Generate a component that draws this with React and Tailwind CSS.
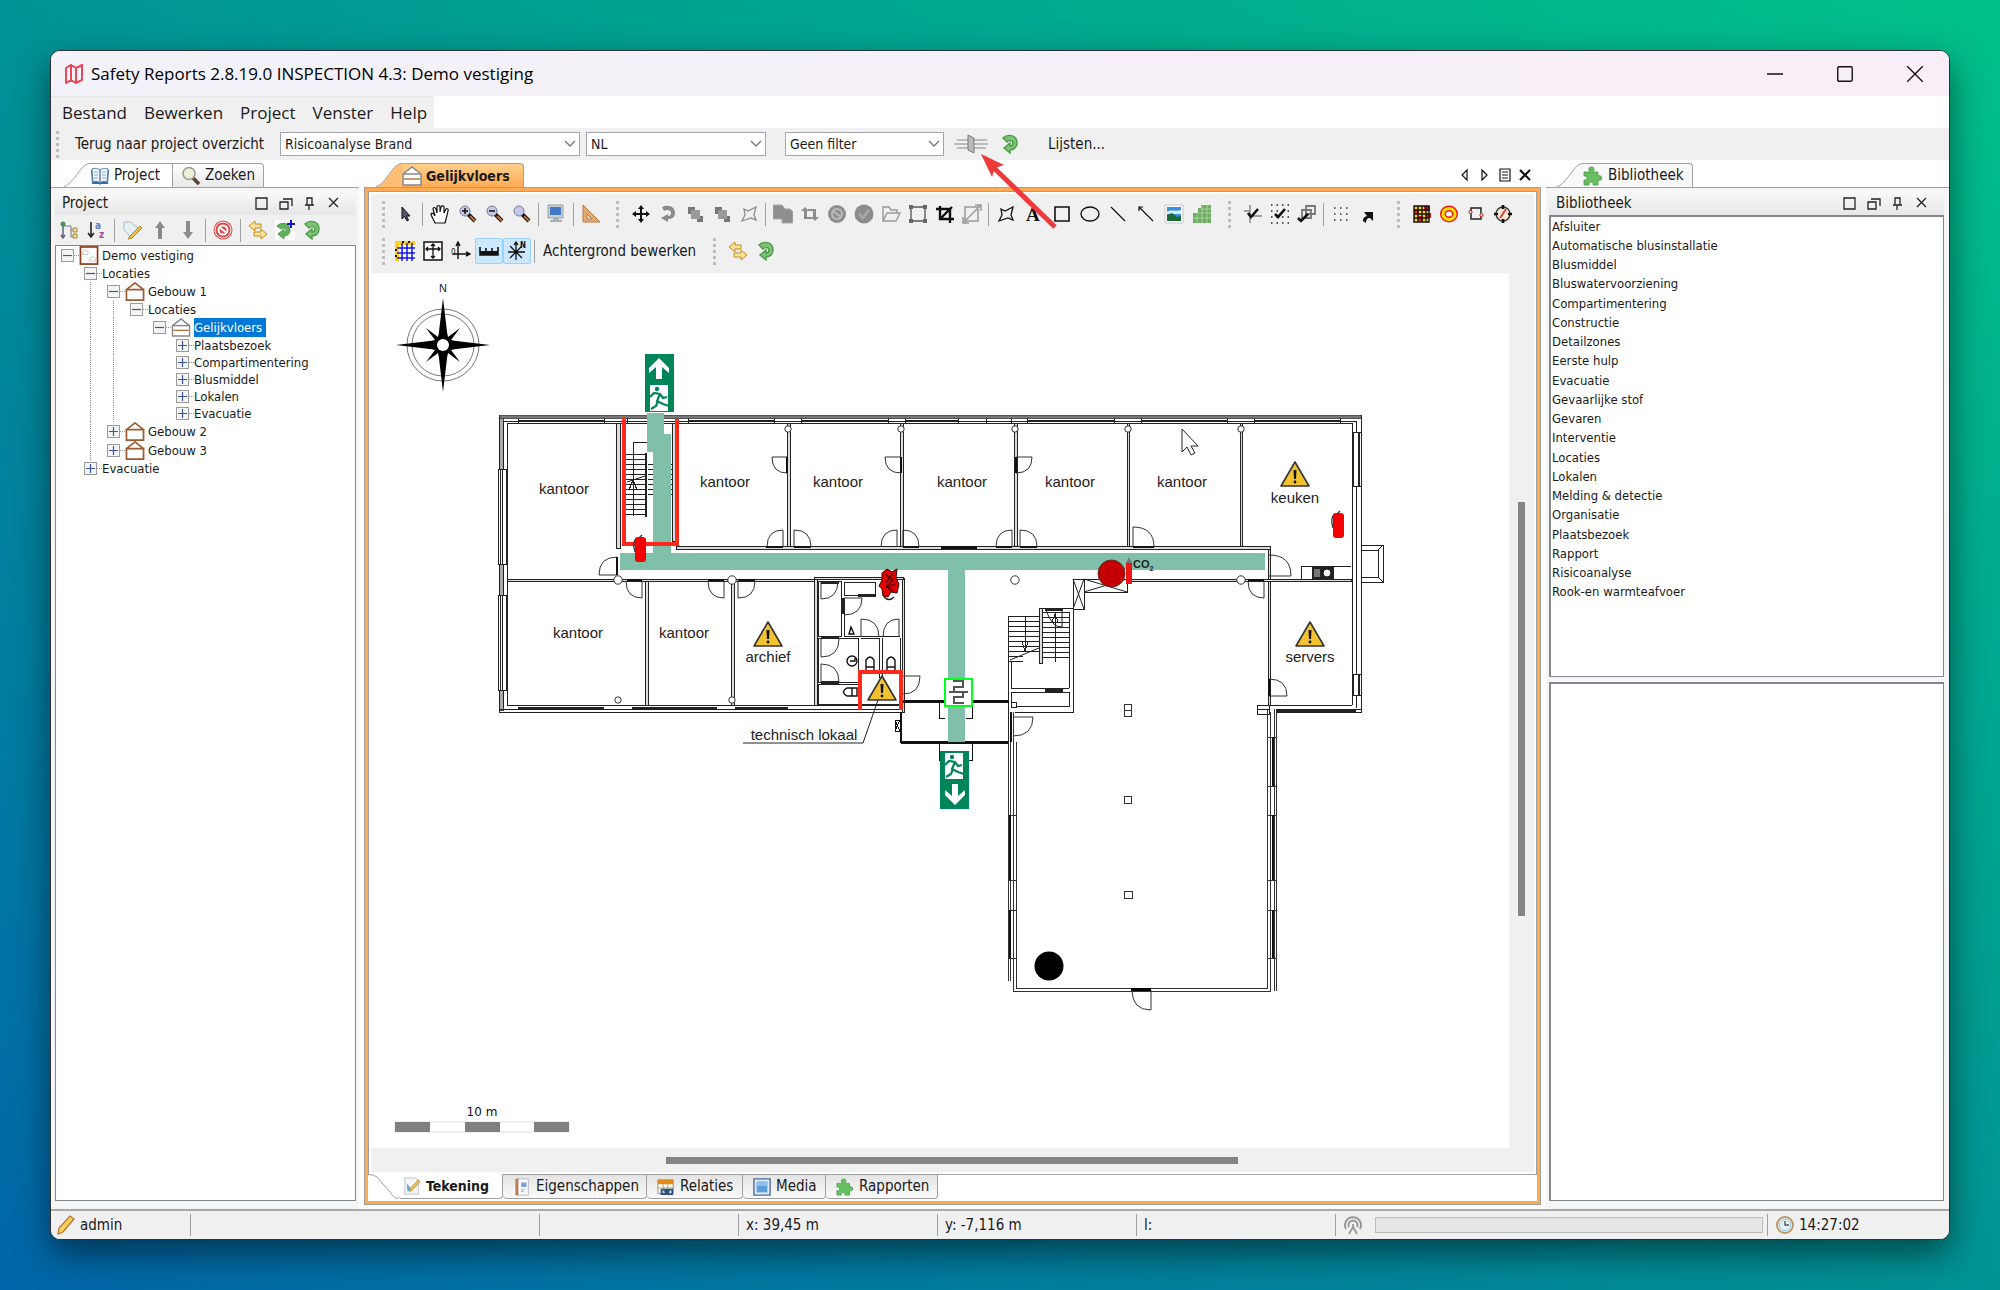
import { useState } from 'react';

const GREEN = '#5fb257';

// 20x20 glyphs used by the toolbars, tabs and the status bar
const icons = {
  book: (
    <>
      <path d="M1 4l1 14h7l1 1 1-1h7l1-14z" fill="#2f6ea5" />
      <path d="M2 3c3-1 6-1 8 1v13c-2-2-5-2-7-1zM18 3c-3-1-6-1-8 1v13c2-2 5-2 7-1z" fill="#eef4f9" stroke="#5c87ab" />
      <path d="M4 6h4M4 9h4M4 12h4M12 6h4M12 9h4M12 12h4" stroke="#9db3c4" />
    </>
  ),
  search: (
    <>
      <path d="M12 12l6 6" stroke="#5a4037" strokeWidth="3.5" />
      <circle cx="8" cy="7.5" r="6" fill="#eef0d8" stroke="#9c9c94" strokeWidth="1.6" />
    </>
  ),
  floor: (
    <>
      <path d="M1 8L10 1l9 7v11H1z" fill="#fff" stroke="#888" strokeWidth="1.5" />
      <path d="M1 8h18" stroke="#888" strokeWidth="1.5" />
      <path d="M2 13h16" stroke="#b5773f" strokeWidth="1.5" />
    </>
  ),
  building: <path d="M0 8h20M1 8v11h18V8L10 1 1 8" fill="none" stroke="#9a5b33" strokeWidth="1.8" />,
  site: (
    <>
      <rect x="1" y="1" width="18" height="18" fill="#fff" stroke="#8b3e16" strokeWidth="1.8" />
      <path d="M3 9V6l3-2 3 2v3zM11 16v-3l3-2 3 2v3z" fill="none" stroke="#c4c4c4" />
    </>
  ),
  puzzle: (
    <path
      d="M1 6h6c-2-3-1-5 1.500-5s3.500 2 1.500 5h5v4c5-2 5 6 0 4v5h-5c1-4-5-4-4 0H1v-5c4 1 4-5 0-4z"
      fill="#67bf62" stroke="#4a9b47" strokeWidth="0.800"
    />
  ),
  treeSort: (
    <>
      <circle cx="4" cy="4" r="2.500" fill="#3b9b55" />
      <path d="M4 6v12M2 15l2 3 2-3" stroke="#667" fill="none" strokeWidth="1.500" />
      <path d="M4 6h8v11h3M12 10h3" stroke="#778" fill="none" />
      <path d="M14 8h4v4h-4zM14 14h4v4h-4z" fill="#f3e09a" stroke="#a58b3a" />
    </>
  ),
  sortAz: (
    <>
      <path d="M4 2v15M1 13l3 4 3-4" stroke="#222" fill="none" strokeWidth="1.600" />
      <text x="8" y="9" fontSize="10" fontWeight="bold" fill="#5b7fc7">a</text>
      <text x="12" y="18" fontSize="10" fontWeight="bold" fill="#a34a9a">z</text>
    </>
  ),
  tag: (
    <>
      <path d="M2 2l7 0 8 7-7 9-8-8z" fill="#e6eff5" stroke="#a9bccb" />
      <path d="M18 6l-10 10-2 3 4-1L20 8z" fill="#f5c04a" stroke="#b98224" />
    </>
  ),
  up: <path d="M10 1l5 7h-3v11H8V8H5z" fill="#8c8c8c" />,
  down: <path d="M10 19l5-7h-3V1H8v11H5z" fill="#8c8c8c" />,
  forbid: (
    <>
      <circle cx="10" cy="10" r="9.500" fill="#e0494b" />
      <circle cx="10" cy="10" r="8" fill="none" stroke="#fff" />
      <circle cx="10" cy="10" r="4.500" fill="none" stroke="#fff" strokeWidth="2" />
      <path d="M6 7l8 6" stroke="#fff" strokeWidth="2" />
    </>
  ),
  swap: (
    <>
      <path d="M1 6l6-5v3h6v4H7v3z" fill="#fbe29a" stroke="#c48a1c" />
      <path d="M19 14l-6-5v3H6v4h7v3z" fill="#fbe29a" stroke="#c48a1c" />
    </>
  ),
  refresh: (
    <>
      <path d="M3 4c4-4 14-4 14 5 0 5-4 7-7 7v3l-6-5 6-5v3c2 0 3-1 3-3 0-3-4-3-6-1z" fill="#7cc473" stroke="#4d9a48" strokeWidth="1.400" />
    </>
  ),
  refreshPlus: (
    <>
      <rect width="20" height="20" fill="#fff" />
      <path d="M2 6c3-4 13-4 13 4 0 4-3 6-6 6v3l-6-5 6-5v3c2 0 2-1 2-2 0-3-3-2-5-1z" fill={GREEN} stroke="#4d9a48" />
      <path d="M16 0v8M12 4h8" stroke="#1717d6" strokeWidth="2" />
    </>
  ),
  pointer: <path d="M7 3v12l2.500-2.500L12 17l1.500-.8L11.500 12H15z" fill="#55557a" stroke="#111" />,
  hand: (
    <path
      d="M5 19C4 16 1 12 1 10c1-2 3 0 4 2L3 5c0-2 2-2 3 0l1 4V3c0-2 3-2 3 0v5l1-5c1-2 3-1 3 0v6l2-4c1-1 3 0 2 2-1 5-2 8-3 12z"
      fill="#fff" stroke="#111" strokeWidth="1.200"
    />
  ),
  zoomIn: (
    <>
      <path d="M10 10l7 7" stroke="#111" strokeWidth="4" /><path d="M12 12l5 5" stroke="#c4722b" strokeWidth="2" />
      <circle cx="7" cy="7" r="5" fill="#c5c7e6" stroke="#77799a" /><path d="M4 7h6M7 4v6" stroke="#111" strokeWidth="1.500" />
    </>
  ),
  zoomOut: (
    <>
      <path d="M10 10l7 7" stroke="#111" strokeWidth="4" /><path d="M12 12l5 5" stroke="#c4722b" strokeWidth="2" />
      <circle cx="7" cy="7" r="5" fill="#c5c7e6" stroke="#77799a" /><path d="M4 7h6" stroke="#111" strokeWidth="1.500" />
    </>
  ),
  zoom: (
    <>
      <path d="M10 10l7 7" stroke="#111" strokeWidth="4" /><path d="M12 12l5 5" stroke="#c4722b" strokeWidth="2" />
      <circle cx="7" cy="7" r="5" fill="#c5c7e6" stroke="#77799a" />
    </>
  ),
  monitor: (
    <>
      <path d="M2 1h15v13H2z" fill="#c9ced4" stroke="#9aa1a8" /><path d="M4 3h11v8H4z" fill="#3f78c9" />
      <path d="M7 14h6v2h3v2H4v-2h3z" fill="#aab0b6" />
    </>
  ),
  triangle: <path d="M2 1v17h17zM6 10l5 5H6z" fill="#e7a970" stroke="#b87a44" fillRule="evenodd" />,
  move: <path d="M10 1l3 4h-2v4h4V7l4 3-4 3v-2h-4v4h2l-3 4-3-4h2v-4H5v2l-4-3 4-3v2h4V5H7z" fill="#111" />,
  rotate: <path d="M4 3c7-3 13 0 13 6 0 5-4 6-7 6v3l-7-4 7-4v2c2 0 3-1 3-3 0-3-4-4-7-2z" fill="#8c8c8c" />,
  layers: (
    <>
      <path d="M3 3h7v7H3zM12 12h6v6h-6z" fill="#777" /><path d="M6 6h9v9H6z" fill="#9a9a9a" />
    </>
  ),
  polyGray: <path d="M5 5l4 2 8-4-2 8 2 5-5-2-9 3 3-6z" fill="none" stroke="#8c8c8c" strokeWidth="1.300" />,
  poly: <path d="M5 5l4 2 8-4-2 8 2 5-5-2-9 3 3-6z" fill="none" stroke="#111" strokeWidth="1.300" />,
  pages: <path d="M0 1h9l3 4h5l3 3v11H9v-4H0z" fill="#8f8f8f" stroke="#a8a8a8" />,
  loop: <path d="M4 15V7H1l4-4 4 4H7v6h5v2zM16 5v8h3l-4 4-4-4h2V7H8V5z" fill="#8c8c8c" />,
  noGray: (
    <>
      <circle cx="10" cy="10" r="9" fill="#8c8c8c" /><circle cx="10" cy="10" r="5" fill="none" stroke="#bbb" strokeWidth="2" />
      <path d="M6 7l8 6" stroke="#bbb" strokeWidth="2" />
    </>
  ),
  okGray: (
    <>
      <circle cx="10" cy="10" r="9.500" fill="#8c8c8c" /><path d="M5 10l4 4 6-8" fill="none" stroke="#a8a8a8" strokeWidth="2.500" />
    </>
  ),
  folder: <path d="M2 17V3h6l2 3h6v3M2 17l4-8h13l-4 8z" fill="none" stroke="#999" strokeWidth="1.400" />,
  selection: (
    <>
      <path d="M3 3h14v14H3z" fill="none" stroke="#555" strokeWidth="1.300" />
      <path d="M1 1h4v4H1zM15 1h4v4h-4zM1 15h4v4H1zM15 15h4v4h-4z" fill="#666" />
    </>
  ),
  crop: <path d="M5 2v13h14M1 5h14v14M6 14L17 3" fill="none" stroke="#111" strokeWidth="2.400" />,
  resize: <path d="M3 3h13v14H3zM1 19L19 1M13 1h6v6M1 13v6h6" fill="none" stroke="#999" strokeWidth="1.500" />,
  letter: <text x="2" y="17" fontSize="19" fontWeight="bold" fill="#111" fontFamily="Liberation Serif, serif">A</text>,
  rect: <path d="M3 3h14v14H3z" fill="none" stroke="#111" strokeWidth="1.600" />,
  ellipse: <ellipse cx="10" cy="10" rx="9" ry="7" fill="none" stroke="#111" strokeWidth="1.400" />,
  line: <path d="M3 3l14 14" stroke="#111" strokeWidth="1.200" />,
  lineArrow: <path d="M3 3l14 14M3 7V3h4" fill="none" stroke="#111" strokeWidth="1.200" />,
  image: (
    <>
      <path d="M1 1h18v18H1z" fill="#fff" stroke="#c8c8c8" /><path d="M3 3h14v14H3z" fill="#3a8fe0" />
      <path d="M3 8c3-3 9 0 14-2v4H3z" fill="#d9eefb" /><path d="M3 11l5-2 5 4 4-1v5H3z" fill="#1c6b35" />
    </>
  ),
  greenGrid: (
    <>
      <path d="M1 9h5V4h3V1h10v18H1z" fill="#6fae62" />
      <path d="M1 14h18M6 9h13M9 5h10M5 9v10M10 1v18M15 1v18" stroke="#b5d8ac" strokeWidth="0.800" />
    </>
  ),
  crossCheck: (
    <>
      <path d="M7 1v18M1 7h6M7 12h12" stroke="#888" strokeWidth="1.500" />
      <path d="M5 9l3 4 7-8" fill="none" stroke="#111" strokeWidth="2.600" />
    </>
  ),
  dotsCheck: (
    <>
      <path d="M1 1h18M1 7h18M1 13h18M1 19h18" stroke="#222" strokeWidth="1.500" strokeDasharray="1.500 4" />
      <path d="M5 10l3 3 7-8" fill="none" stroke="#111" strokeWidth="2.600" />
    </>
  ),
  layersCheck: (
    <>
      <path d="M9 2h9v8H9zM5 6h9v8H5z" fill="#eee" stroke="#777" strokeWidth="1.800" />
      <path d="M1 14l3 3 7-7" fill="none" stroke="#111" strokeWidth="2.600" />
    </>
  ),
  dots: <path d="M3 4h15M3 10h15M3 16h15" stroke="#333" strokeWidth="1.500" strokeDasharray="1.500 4.500" />,
  diagArrow: <path d="M6 8h9v9l-3-3c-3 0-4 2-4 5l-3-2c0-3 1-4 4-5z" fill="#111" />,
  redGrid: (
    <>
      <path d="M2 2h15v15H2z" fill="#ffd400" /><path d="M2 5h5v4H2zM12 2h6v5h-6zM6 12h5v5H6zM14 9h5v5h-5z" fill="#e31b1b" />
      <path d="M2 2h15v16H2zM2 6h15M2 10h15M2 14h15M6 2v16M10 2v16M14 2v16" fill="none" stroke="#111" strokeWidth="1.400" />
    </>
  ),
  buoy: (
    <>
      <ellipse cx="10" cy="10" rx="9" ry="8.500" fill="#ee1c1c" />
      <ellipse cx="10" cy="10" rx="7.500" ry="7" fill="#ffe000" />
      <ellipse cx="10" cy="10" rx="4.500" ry="4" fill="#ee1c1c" />
      <ellipse cx="10" cy="10" rx="3" ry="2.500" fill="#f0f0f0" />
    </>
  ),
  node: (
    <>
      <path d="M5 4h10v11H5z" fill="none" stroke="#222" strokeWidth="1.500" />
      <circle cx="4.500" cy="8" r="1.600" fill="#fff" stroke="#d11" /><circle cx="15.500" cy="11" r="1.600" fill="#fff" stroke="#d11" />
    </>
  ),
  compass: (
    <>
      <circle cx="10" cy="10" r="7" fill="#f7e9cf" stroke="#333" strokeWidth="1.300" />
      <path d="M10 1v4M10 15v4M1 10h4M15 10h4" stroke="#111" strokeWidth="2.600" /><path d="M7 14l6-9" stroke="#e34" strokeWidth="1.800" />
    </>
  ),
  grid: (
    <>
      <path d="M0 0h20v4H4v16H0z" fill="#ffcf1a" /><path d="M4 4h16v16H4z" fill="#fff" />
      <path d="M7 2v18M12 2v18M17 2v18M2 7h18M2 12h18M2 17h18" stroke="#1414e6" strokeWidth="1.500" />
      <path d="M7 1h2M13 1h2M1 8v2M1 14v2" stroke="#111" strokeWidth="2" />
    </>
  ),
  fit: (
    <>
      <path d="M1 1h18v18H1z" fill="#fff" stroke="#111" strokeWidth="1.500" />
      <path d="M10 3v14M3 8h14M8 5l2-2 2 2M8 15l2 2 2-2M5 6L3 8l2 2M15 6l2 2-2 2" fill="none" stroke="#111" strokeWidth="1.300" />
    </>
  ),
  axes: (
    <>
      <path d="M7 2v16M2 13h16M5 5l2-4 2 4M15 11l4 2-4 2" fill="none" stroke="#111" strokeWidth="1.400" />
      <text x="0" y="14" fontSize="8" fill="#111">0</text>
    </>
  ),
  scale: (
    <>
      <path d="M1 6v8h18V6M7 7v4M13 7v4" fill="none" stroke="#111" strokeWidth="1.600" />
      <path d="M1 10h18v4H1z" fill="#111" />
    </>
  ),
  north: (
    <>
      <path d="M9 2v17M1 11h17M3 5l12 12M15 5L3 17M7 4l2-3 2 3" fill="none" stroke="#111" strokeWidth="1.300" />
      <text x="13" y="7" fontSize="8" fontWeight="bold" fill="#111">N</text>
    </>
  ),
  pen: (
    <>
      <path d="M2 1h12l3 3v15H2z" fill="#f5f8fb" stroke="#b7bec5" /><path d="M4 7l6 7-5 2z" fill="#64a9d9" />
      <path d="M17 3l2 2-9 10-3 1 1-3z" fill="#f2c14d" stroke="#b98224" strokeWidth="0.800" />
    </>
  ),
  notebook: (
    <>
      <path d="M3 1h14v18H3z" fill="#fafbfc" stroke="#b0b5ba" /><path d="M3 1h3v18H3z" fill="#c07a50" />
      <path d="M9 5h6v5H9z" fill="#7d9fe0" /><path d="M9 13h4M9 15h3" stroke="#9ab" />
    </>
  ),
  relations: (
    <>
      <path d="M1 2h17v15H1z" fill="#fff" stroke="#8a8a8a" /><path d="M1 2h17v5H1z" fill="#e58b1c" />
      <path d="M1 11h17M7 7v10M12 7v10" stroke="#b9a24a" />
      <path d="M5 13h5v5H5zM12 13h5v5h-5zM8 15h6" fill="none" stroke="#2d4f86" strokeWidth="2" />
    </>
  ),
  media: (
    <>
      <path d="M1 1h18v18H1z" fill="#dfeaf5" stroke="#4a6a9a" strokeWidth="1.500" /><path d="M4 4h12v12H4z" fill="#5d9edb" />
      <path d="M4 4h12v5H4z" fill="#8cc1ee" />
    </>
  ),
  pencil: <path d="M14 1l4 3L7 17l-5 2 1-6z" fill="#f6cf5c" stroke="#b5762a" strokeWidth="1.200" />,
  antenna: (
    <>
      <path d="M3 14a8 8 0 1 1 14 0M6 12a4.500 4.500 0 1 1 8 0" fill="none" stroke="#999" strokeWidth="2" />
      <path d="M10 9v5M10 12l-4 7M10 12l4 7" stroke="#999" strokeWidth="1.800" />
    </>
  ),
  clock: (
    <>
      <circle cx="10" cy="10" r="8" fill="#e6f1fb" stroke="#b89a66" strokeWidth="2" />
      <circle cx="10" cy="10" r="5.500" fill="none" stroke="#9cc4e8" /><path d="M10 6v4h4" fill="none" stroke="#555" strokeWidth="1.400" />
    </>
  ),
};

function Icon({ name, className = 'size-5' }) {
  return <svg viewBox="0 0 20 20" className={`${className} shrink-0`}>{icons[name]}</svg>;
}

function ToolButton({ name, active, narrow }) {
  return (
    <button
      aria-label={name}
      className={`flex h-[26px] shrink-0 items-center justify-center rounded-xs border ${narrow ? 'w-[27px]' : 'w-7'} ${
        active ? 'border-[#99d1ff] bg-[#cce8ff]' : 'border-transparent'
      }`}
    >
      <Icon name={name} />
    </button>
  );
}

const Sep = () => <span className="mx-[3px] h-[23px] w-px shrink-0 bg-[#a0a0a0]" />;
const Grip = () => <span className="h-[27px] w-0 shrink-0 border-l-3 border-dotted border-[#bdbdbd]" />;

const tools = (names, narrow) => names.map((n, i) => (n === '|' ? <Sep key={i} /> : <ToolButton key={i} name={n} narrow={narrow} />));

function Combo({ label, value, className }) {
  return (
    <div className={`relative ${className}`}>
      <select aria-label={label} defaultValue={value} className="size-full appearance-none border border-[#a3a6ae] bg-white px-1 text-sm outline-none">
        <option>{value}</option>
      </select>
      <svg viewBox="0 0 12 8" className="pointer-events-none absolute top-2 right-1 h-2 w-3">
        <path d="M1 1l5 5 5-5" fill="none" stroke="#777" strokeWidth="1.3" />
      </svg>
    </div>
  );
}

// slanted left side of a view tab
function TabEdge({ fill }) {
  return (
    <svg viewBox="0 0 26 24" className="h-6 w-[26px] shrink-0">
      <path d="M0 24C6 24 16 6 20 3Q23 0.500 26 0.500V24z" fill={fill} />
      <path d="M0 23.500C6 23.500 16 6 20 3Q23 0.500 26 0.500" fill="none" stroke="#a0a0a0" />
    </svg>
  );
}

function WindowGlyphs() {
  const glyphs = [
    'M2 2h11v11H2z',
    'M2 6h8v7H2zM5 3h9v7',
    'M5 2h5v7H5zM3 9h9M7 9v5',
    'M3 2l9 9M12 2l-9 9',
  ];
  return (
    <div className="ml-auto flex gap-[9px] pr-[15px]">
      {glyphs.map((d) => (
        <button key={d} aria-label="Venster">
          <svg viewBox="0 0 15 15" className="size-[15px]"><path d={d} fill="none" stroke="#222" strokeWidth="1.3" /></svg>
        </button>
      ))}
    </div>
  );
}

function PanelHeader({ title }) {
  return (
    <div className="flex h-6 shrink-0 items-center bg-linear-to-b from-[#fafafa] to-[#e6e6e6] pl-[7px]">
      <h2>{title}</h2>
      <WindowGlyphs />
    </div>
  );
}

// guides: one entry per column left of the expander, true where a dotted line passes
const tree = [
  { label: 'Demo vestiging', guides: [], open: true, icon: 'site' },
  { label: 'Locaties', guides: [0], open: true },
  { label: 'Gebouw 1', guides: [0, 1], open: true, icon: 'building' },
  { label: 'Locaties', guides: [0, 1, 1], open: true },
  { label: 'Gelijkvloers', guides: [0, 1, 1, 0], open: true, icon: 'floor', selected: true },
  { label: 'Plaatsbezoek', guides: [0, 1, 1, 0, 0] },
  { label: 'Compartimentering', guides: [0, 1, 1, 0, 0] },
  { label: 'Blusmiddel', guides: [0, 1, 1, 0, 0] },
  { label: 'Lokalen', guides: [0, 1, 1, 0, 0] },
  { label: 'Evacuatie', guides: [0, 1, 1, 0, 0] },
  { label: 'Gebouw 2', guides: [0, 1], icon: 'building' },
  { label: 'Gebouw 3', guides: [0, 1], icon: 'building' },
  { label: 'Evacuatie', guides: [0] },
];

function TreeRow({ item }) {
  return (
    <li className={`flex items-center ${item.icon ? 'h-[19px]' : 'h-[17px]'}`}>
      {item.guides.map((g, i) => (
        <span key={i} className="flex h-full w-[23px] shrink-0 justify-center">
          {g ? <span className="border-l border-dotted border-[#999]" /> : null}
        </span>
      ))}
      <span className="flex w-[23px] shrink-0 items-center justify-end">
        <button aria-label={item.label} className="flex size-[13px] items-center justify-center border border-[#9a9a9a] bg-[#f4f4f4]">
          <svg viewBox="0 0 9 9" className="size-[9px]">
            <path d={item.open ? 'M0 4.500h9' : 'M0 4.500h9M4.500 0v9'} stroke="#3c56a0" strokeWidth="1.2" />
          </svg>
        </button>
        <span className="w-[5px] border-t border-dotted border-[#999]" />
      </span>
      {item.icon && <Icon name={item.icon} className="mr-[3px] h-[19px] w-5" />}
      <span className={`text-[13px] leading-4 ${item.selected ? 'bg-[#0078d7] pr-1 leading-[19px] text-white' : ''}`}>{item.label}</span>
    </li>
  );
}

function ProjectPanel() {
  return (
    <aside className="flex w-[308px] shrink-0 flex-col">
      <div className="flex h-[27px] shrink-0 items-end pl-[13px]">
        <TabEdge fill="#fff" />
        <button className="flex h-6 w-[83px] items-center gap-1 border-t border-r border-[#a0a0a0]">
          <Icon name="book" />Project
        </button>
        <button className="flex h-6 w-[91px] items-center justify-center gap-1 rounded-tr-sm border-t border-r border-[#a0a0a0] bg-linear-to-b from-white to-[#e8e8e8]">
          <Icon name="search" />Zoeken
        </button>
      </div>
      <div className="flex grow flex-col border-t border-[#a0a0a0] bg-[#f5f5f5] pt-[3px] pr-[3px] pb-2 pl-1">
        <PanelHeader title="Project" />
        <div className="flex h-[30px] shrink-0 items-center bg-[#f0f0f0]">
          {tools(['treeSort', 'sortAz', '|', 'tag', 'up', 'down', '|', 'forbid', '|'])}
          {tools(['swap', 'refreshPlus', 'refresh'], true)}
        </div>
        <ul className="grow border border-[#828790] bg-white">
          {tree.map((item, i) => <TreeRow key={i} item={item} />)}
        </ul>
      </div>
    </aside>
  );
}

const library = [
  'Afsluiter', 'Automatische blusinstallatie', 'Blusmiddel', 'Bluswatervoorziening', 'Compartimentering',
  'Constructie', 'Detailzones', 'Eerste hulp', 'Evacuatie', 'Gevaarlijke stof', 'Gevaren', 'Interventie',
  'Locaties', 'Lokalen', 'Melding & detectie', 'Organisatie', 'Plaatsbezoek', 'Rapport', 'Risicoanalyse',
  'Rook-en warmteafvoer',
];

function LibraryPanel() {
  return (
    <aside className="flex w-[403px] shrink-0 flex-col">
      <div className="flex h-[27px] shrink-0 items-end pl-[11px]">
        <TabEdge fill="#f8f8f8" />
        <button className="flex h-6 w-[110px] items-center gap-[5px] rounded-tr-sm border-t border-r border-[#a0a0a0] bg-[#f8f8f8]">
          <Icon name="puzzle" />Bibliotheek
        </button>
      </div>
      <div className="flex grow flex-col border-t border-[#a0a0a0] bg-[#f5f5f5] pt-[3px] pr-[5px] pb-2 pl-[3px]">
        <PanelHeader title="Bibliotheek" />
        <ul className="grid h-[462px] shrink-0 border-2 border-r border-b border-[#828790] bg-white pr-1 pb-[74px] pl-px text-[13px]">
          {library.map((name) => <li key={name} className="flex items-center leading-4">{name}</li>)}
        </ul>
        <div className="mt-[5px] grow border-2 border-r border-b border-[#828790] bg-white" />
      </div>
    </aside>
  );
}

const rooms = [
  ['kantoor', 564, 494], ['kantoor', 725, 487], ['kantoor', 838, 487], ['kantoor', 962, 487], ['kantoor', 1070, 487],
  ['kantoor', 1182, 487], ['keuken', 1295, 503], ['kantoor', 578, 638], ['kantoor', 684, 638], ['archief', 768, 662],
  ['servers', 1310, 662],
];

// double-lined inner walls as x, y, width, height
const walls = [
  [616, 423, 4, 125], [672, 423, 4, 118], [787, 423, 3, 123], [900, 423, 3, 123], [1014, 423, 3, 123], [1127, 423, 2, 123],
  [1240, 423, 2, 123], [676, 546, 594, 3], [507, 579, 309, 2], [645, 581, 3, 124], [731, 581, 3, 124], [814, 578, 3, 127],
  [1268, 549, 2, 156], [1127, 579, 224, 2], [902, 578, 2, 134], [814, 577, 89, 2],
];

// doors: hinge x, y, then the leaf end and the arc end relative to the hinge
const doors = [
  [617, 575, -18, 0, 0, -18], [642, 581, 0, 17, -16, 0], [724, 581, 0, 17, -16, 0], [738, 581, 0, 17, 17, 0],
  [787, 457, -15, 0, 0, 16], [783, 547, 0, -17, -16, 0], [794, 547, 0, -17, 17, 0], [901, 457, -16, 0, 0, 16],
  [897, 547, 0, -17, -16, 0], [903, 547, 0, -17, 16, 0], [1012, 547, 0, -17, -16, 0], [1016, 457, 16, 0, 0, 16],
  [1020, 547, 0, -17, 17, 0], [1133, 547, 0, -20, 21, 0], [1269, 576, 22, 0, 0, -21], [1264, 581, 0, 17, -16, 0],
  [1269, 696, 18, 0, 0, -17], [903, 676, 17, 0, 0, 18], [821, 581, 0, 18, 17, 0], [844, 598, 18, 0, 0, 17],
  [861, 637, 0, -18, 18, 0], [899, 637, 0, -18, -16, 0], [821, 639, 0, 18, 18, 0], [821, 682, 0, -18, 18, 0],
  [1013, 717, 20, 0, 0, 19], [1151, 990, 0, 20, -19, 0],
];

const range = (n) => Array.from({ length: n }, (_, i) => i);

function Warning({ x, y }) {
  return (
    <g>
      <path d={`M${x} ${y}l14 24h-28z`} fill="#f2c230" stroke="#333" strokeWidth="1.6" strokeLinejoin="round" />
      <path d={`M${x - 1.5} ${y + 8}h3l-.5 9h-2z`} fill="#111" />
      <circle cx={x} cy={y + 20} r="1.400" fill="#111" />
    </g>
  );
}

function Extinguisher({ x, y }) {
  return (
    <g>
      <path d={`M${x + 9} ${y}l-3 3c-6 0-6 8-4 14`} fill="none" stroke="#333" strokeWidth="1.3" />
      <rect x={x + 2} y={y + 2} width="11" height="25" rx="3" fill="#f40000" />
    </g>
  );
}

function Runner({ x, y }) {
  return (
    <g fill="none" stroke="#00855b" strokeWidth="2.2">
      <rect x={x} y={y} width="18" height="26" fill="#fff" stroke="none" />
      <circle cx={x + 7} cy={y + 4} r="2.200" fill="#00855b" stroke="none" />
      <path d={`M${x} ${y + 12}l4-4 6 1 3 4 4-1M${x + 10} ${y + 9}l-3 7 6 3 6 2M${x + 8} ${y + 16}l-2 5-5 3`} />
    </g>
  );
}

function FloorPlan() {
  return (
    <svg viewBox="371 273 1139 874" className="h-[874px] w-[1139px] shrink-0 font-['Liberation_Sans',sans-serif]">
      {/* compass rose */}
      <g transform="translate(443 345)">
        <circle r="36" fill="none" stroke="#777" /><circle r="31" fill="none" stroke="#777" />
        <path d="M0-23L5-8 17-17 8-5 23 0 8 5 17 17 5 8 0 23-5 8-17 17-8 5-23 0-8-5-17-17-5-8z" fill="#000" />
        <path d="M0-47L5-5 47 0 5 5 0 47-5 5-47 0-5-5z" fill="#000" />
        <circle r="6" fill="#fff" />
        <text y="-53" fontSize="11" textAnchor="middle" fill="#222">N</text>
      </g>

      {/* outer walls */}
      <g fill="none" stroke="#222" shapeRendering="crispEdges">
        <rect x="499" y="415" width="862" height="3" fill="#777" stroke="#555" />
        <rect x="499" y="418" width="4" height="292" fill="#aaa" stroke="#444" />
        <path d="M499 415V712H902M1361 415V712H1276M503 421H1356M507 423H1352M503 421V708M507 423V705M1356 421V708M1352 423V705" />
        <path d="M507 705H902M499 709H902M499 712H902" />
        <path d="M518 708H604M632 708H717M735 708H788" strokeWidth="2" />
        <path d="M518 418v5M604 418v5M627 418v5M688 418v5M774 418v5M801 418v5M888 418v5M905 418v5M958 418v5M986 418v5M1011 418v5M1027 418v5M1114 418v5M1141 418v5M1227 418v5M1254 418v5M1340 418v5" />
        <path d="M518 421H604M688 421H774M801 421H888M905 421H958M1027 421H1114M1141 421H1227M1254 421H1340" strokeWidth="2" />
        <rect x="498" y="469" width="8" height="95" fill="#fff" /><rect x="498" y="595" width="8" height="95" fill="#fff" />
        <path d="M500 469v95M502 469v95M500 595v95M502 595v95" />
        <rect x="1353" y="432" width="8" height="54" fill="#fff" /><rect x="1353" y="674" width="8" height="21" fill="#fff" />
        <path d="M1359 432v54M1359 674v21" strokeWidth="2" />
        <path d="M1361 545h22v37h-22M1361 550h17v27h-17M1378 550l5-5M1378 577l5 5" />
        <path d="M1270 705h82M1276 709h85" /><path d="M1276 711h80" strokeWidth="2" />
        <rect x="1257" y="705" width="12" height="9" fill="#fff" /><path d="M1257 709h12" />
      </g>

      {/* inner walls */}
      <g fill="#ddd" stroke="#222" shapeRendering="crispEdges">
        {walls.map(([x, y, w, h]) => <rect key={`${x}-${y}`} x={x} y={y} width={w} height={h} />)}
      </g>

      {/* sanitary block */}
      <g fill="none" stroke="#222" shapeRendering="crispEdges">
        <rect x="818" y="581" width="23" height="55" /><rect x="844" y="582" width="31" height="13" />
        <path d="M844 598V636H900M818 638h40v44h-40zM861 638h18v40M882 638v40M900 638v40M858 598M818 684h41M818 684v20h84" />
        <path d="M858 595h18M821 582h18M821 637h18M821 682h18" strokeWidth="3" />
        <path d="M843 598v16" strokeWidth="3" />
      </g>
      <g fill="#fff" stroke="#111" strokeWidth="1.4">
        <path d="M866 672v-12q4-6 8 0v12zM866 667h8M887 672v-12q4-6 8 0v12zM887 667h8M857 688h-10q-7 4 0 8h10zM852 688v8" />
        <circle cx="852" cy="661" r="5" /><path d="M850 661h5v-3M849 634l2-7 3 7z" />
      </g>

      {/* stairwell left */}
      <g stroke="#222" fill="none" shapeRendering="crispEdges">
        {range(13).map((i) => <path key={i} d={`M626 ${454 + i * 5}h20`} />)}
        {range(7).map((i) => <path key={i} d={`M648 ${464 + i * 5}h25`} />)}
        <path d="M633 516V442h14M629 490l4-10 4 10" /><path d="M646 453v64" strokeWidth="2" />
      </g>
      <path d="M627 482l18-6" stroke="#222" />

      {/* central stairs */}
      <g stroke="#222" fill="none" shapeRendering="crispEdges">
        {range(10).map((i) => <path key={i} d={`M1009 ${616 + i * 5}h${i > 7 ? 14 : 30}M1042 ${612 + i * 5}h27`} />)}
        <path d="M1008 616V742M1025 616v35M1055 612v50M1022 642l3 9 3-9M1052 622l3-8 3 8" />
        <rect x="1039" y="608" width="3" height="55" fill="#ddd" />
        <path d="M1039 608h34v104h-58M1069 612v76M1011 662v26h58M1011 692h58v14h-58z" />
        <path d="M1045 609h18M1045 690h18" strokeWidth="3" />
        <rect x="1011" y="702" width="5" height="5" fill="#fff" />
        <path d="M1073 579h11v30h-11zM1084 579h43v13h-43z" fill="#fff" />
      </g>
      <path d="M1073 579l11 30M1084 579l-11 30M1084 579l43 13M1127 579l-43 13M1010 660l29-12M1046 610q6 18 16 17v-17" fill="none" stroke="#222" />

      {/* entrance */}
      <g fill="none" stroke="#111" shapeRendering="crispEdges">
        <path d="M903 701H1009M901 742H1009" strokeWidth="3" /><path d="M901 712V743M1011 712v30" strokeWidth="2" />
        <path d="M939 703v15h6M972 703v15h-6M939 744v16h6M972 744v16h-6" /><path d="M895 720h5v11h-5zM895 720l5 11M900 720l-5 11" />
        <path d="M941 547h36" strokeWidth="3" />
      </g>

      {/* hall */}
      <g fill="none" stroke="#333" shapeRendering="crispEdges">
        <path d="M1008 742V981M1010 742V981M1013 712V991H1270V712M1016 742V988H1267V709M1274 709V991M1276 709V991" />
        <path d="M1008 815h8M1008 880h8M1008 910h8M1008 958h8M1267 737h9M1267 786h9M1267 815h9M1267 880h9M1267 910h9M1267 958h9" />
        <path d="M1010 815v65M1010 910v48M1273 737v49M1273 815v65M1273 910v48" strokeWidth="2" stroke="#111" />
        <path d="M1131 989h20" stroke="#000" strokeWidth="3" />
        <path d="M1124 704h7v12h-7zM1124 710h7M1124 796h7v7h-7zM1124 891h8v7h-8z" />
      </g>
      <circle cx="1049" cy="966" r="14.500" />

      {/* kitchen */}
      <path d="M1301 579v-13h50" fill="none" stroke="#222" shapeRendering="crispEdges" />
      <rect x="1312" y="567" width="22" height="12" fill="#222" />
      <circle cx="1327" cy="573" r="4" fill="#fff" stroke="#111" /><rect x="1314" y="569" width="6" height="8" fill="#777" />

      <g fill="none" stroke="#333">
        {doors.map(([x, y, lx, ly, ax, ay]) => (
          <path key={`${x}-${y}`} d={`M${x} ${y}l${lx} ${ly}q${ax} ${ay} ${ax - lx} ${ay - ly}`} />
        ))}
      </g>
      {/* door openings seen as thick thresholds */}
      <path
        d="M766 547h17M794 547h17M903 547h16M996 547h16M1020 547h17M1133 547h21M787 457v16M901 457v16M1016 457v16M617 557v18M627 580h15M708 580h16M738 580h17M1248 580h16M1269 679v17"
        stroke="#111" strokeWidth="2.500" shapeRendering="crispEdges"
      />
      <g fill="#fff" stroke="#333">
        {[[788, 429], [901, 429], [1015, 429], [1128, 429], [1241, 429], [618, 700], [732, 700]].map(([x, y]) => <circle key={`${x}-${y}`} cx={x} cy={y} r="3.200" />)}
        {[[618, 580], [732, 580], [1015, 580], [1241, 580]].map(([x, y]) => <circle key={x} cx={x} cy={y} r="4.200" />)}
      </g>

      {/* evacuation route */}
      <path d="M647 413h17v21h7v119H1265v17H965V742H948V570H620V553h33V452h-6z" fill="#80c0aa" />

      {/* compartments */}
      <path d="M624 417V544H677V419" fill="none" stroke="#ff2a1a" strokeWidth="4" />
      <path d="M860 710V672H901V710" fill="none" stroke="#ff2a1a" strokeWidth="4" />

      <rect x="645" y="354" width="29" height="58" fill="#00855b" />
      <path d="M659 358l10 10v5l-7-6v12h-6v-12l-7 6v-5z" fill="#fff" />
      <Runner x={650} y={385} />
      <rect x="940" y="751" width="29" height="58" fill="#00855b" />
      <path d="M955 805l-10-10v-5l7 6v-12h6v12l7-6v5z" fill="#fff" />
      <Runner x={945} y={753} />

      <rect x="945" y="679" width="27" height="27" fill="#fff" stroke="#00ff1a" strokeWidth="2" />
      <path d="M953 681h10v6h-9v5h14M949 692h14v5h-9v6h10" fill="none" stroke="#555" strokeWidth="2" />

      <Extinguisher x={633} y={535} />
      <Extinguisher x={1331} y={511} />
      <path d="M882 573l5-4 5 3 5-3-1 9 3 6-2 9-6-1-3 5-5-1-1-7-3-3 3-6z" fill="#e50000" stroke="#400" />
      <path d="M885 574l8 6-6 6 6 6M893 573l-7 10M895 584l-9 3" fill="none" stroke="#500" strokeWidth="1.500" />
      <path d="M884 597q5 5 10 0" fill="none" stroke="#222" strokeWidth="1.500" />
      <circle cx="1111.500" cy="573.500" r="13.500" fill="#c40000" stroke="#6a2a20" />
      <rect x="1126" y="562" width="6" height="22" fill="#f01414" /><path d="M1126 563l3-6 3 6z" fill="#777" />
      <text x="1133" y="568" fontSize="11" fontWeight="bold" fill="#222">CO<tspan fontSize="7" dy="3">2</tspan></text>

      <path d="M743 743H863L878 700" fill="none" stroke="#222" />
      <Warning x={768} y={622} /><Warning x={1295} y={462} /><Warning x={1310} y={622} /><Warning x={882} y={676} />

      <g fontSize="15" textAnchor="middle" fill="#222">
        {rooms.map(([name, x, y]) => <text key={`${x}-${y}`} x={x} y={y}>{name}</text>)}
        <text x="804" y="740">technisch lokaal</text>
      </g>

      {/* mouse pointer */}
      <path d="M1182 429v23l5-5 4 8 4-2-4-7h7z" fill="#fff" stroke="#223" />

      {/* scale bar */}
      <path d="M395 1122h174v10H395z" fill="#fff" stroke="#e2e2e2" />
      <path d="M395 1122h35v10h-35zM465 1122h35v10h-35zM534 1122h35v10h-35z" fill="#808080" />
      <text x="482" y="1116" fontSize="12" textAnchor="middle" fill="#111" fontFamily="DejaVu Sans, sans-serif">10 m</text>
    </svg>
  );
}

const views = [
  { label: 'Tekening', icon: 'pen', width: 'w-[105px]' },
  { label: 'Eigenschappen', icon: 'notebook', width: 'w-[144px]' },
  { label: 'Relaties', icon: 'relations', width: 'w-24' },
  { label: 'Media', icon: 'media', width: 'w-[83px]' },
  { label: 'Rapporten', icon: 'puzzle', width: 'w-28' },
];

function Editor() {
  const [view, setView] = useState('Tekening');

  return (
    <main className="flex min-w-0 grow flex-col pb-1">
      <div className="flex h-[27px] shrink-0 items-end pl-3">
        <TabEdge fill="#ffbe72" />
        <button className="flex h-6 w-[122px] items-center gap-1 rounded-tr-sm border-t border-r border-[#a0a0a0] bg-linear-to-b from-[#ffd08c] to-[#ffab54] text-sm font-bold">
          <Icon name="floor" />Gelijkvloers
        </button>
        <div className="mr-2 ml-auto flex h-6 items-center gap-1">
          {['M10 3v10L5 8z', 'M5 3v10l5-5z', 'M3 2h10v12H3zM5 5h6M5 8h6M5 11h6', 'M3 3l10 10M13 3L3 13'].map((d, i) => (
            <button key={d} aria-label="Navigatie">
              <svg viewBox="0 0 16 16" className="size-4"><path d={d} fill="none" stroke="#111" strokeWidth={i > 2 ? 2.2 : 1.2} /></svg>
            </button>
          ))}
        </div>
      </div>
      <div className="flex min-h-0 grow flex-col border border-[#a0a0a0] bg-[#ffab54] p-[3px]">
        <div className="flex min-h-0 grow flex-col border border-[#a0a0a0] bg-white p-0.5">
          <div className="shrink-0 space-y-px bg-[#f0f0f0] pt-0.5 pb-1 pl-[11px]">
            <div className="flex h-9 items-center">
              <Grip />
              <div className="ml-[6px] flex items-center">
                {tools(['pointer', '|', 'hand'])}
                {tools(['zoomIn', 'zoomOut', 'zoom'], true)}
                {tools(['|', 'monitor', '|', 'triangle'])}
              </div>
              <div className="mr-2 ml-[11px] flex"><Grip /></div>
              <div className="flex items-center">
                {tools(['move', 'rotate', 'layers', 'layers', 'polyGray', '|', 'pages', 'loop', 'noGray', 'okGray', 'folder', 'selection', 'crop', 'resize'], true)}
                {tools(['|', 'poly', 'letter', 'rect', 'ellipse', 'line', 'lineArrow', 'image', 'greenGrid'])}
              </div>
              <div className="mr-2 ml-3 flex"><Grip /></div>
              <div className="flex items-center">
                {tools(['crossCheck', 'dotsCheck', 'layersCheck', '|', 'dots', 'diagArrow'], true)}
              </div>
              <div className="mr-2 ml-4 flex"><Grip /></div>
              {tools(['redGrid', 'buoy', 'node', 'compass'], true)}
            </div>
            <div className="flex h-9 items-center">
              <Grip />
              <div className="ml-[6px] flex items-center">
                {tools(['grid', 'fit', 'axes'])}
                <ToolButton name="scale" active />
                <ToolButton name="north" active />
                <Sep />
              </div>
              <button className="mx-[5px] whitespace-nowrap">Achtergrond bewerken</button>
              <div className="mr-2 ml-3 flex"><Grip /></div>
              {tools(['swap', 'refresh'])}
            </div>
          </div>
          <div className="flex min-h-0 grow">
            <div className="min-w-0 grow overflow-hidden bg-white"><FloorPlan /></div>
            <div className="flex w-[25px] shrink-0 flex-col items-center bg-[#f0f0f0] pt-[229px]">
              <div className="h-[414px] w-[7px] bg-[#858585]" />
            </div>
          </div>
          <div className="flex h-6 shrink-0 items-center bg-[#f0f0f0] pl-[295px]">
            <div className="h-[7px] w-[572px] bg-[#858585]" />
          </div>
        </div>
        <div className="flex h-[26px] shrink-0 bg-white">
          <svg viewBox="0 0 30 25" className="-mt-px h-[25px] w-[30px] shrink-0">
            <path d="M0 0h30v24.500Q26 24 22 18L9 3Q6 .5 0 .5z" fill="#fff" />
            <path d="M0 .5Q6 .5 9 3L22 18Q26 24.500 30 24.500" fill="none" stroke="#a0a0a0" />
          </svg>
          {views.map(({ label, icon, width }) => (
            <button
              key={label}
              onClick={() => setView(label)}
              className={`${width} -mt-px flex h-[25px] shrink-0 items-center gap-[5px] rounded-b-sm border-r border-b border-[#a0a0a0] ${
                view === label ? 'bg-white pl-[5px] text-sm font-bold' : 'border-t bg-linear-to-b from-[#e4e4e4] to-[#fafafa] pl-2.5'
              }`}
            >
              <Icon name={icon} className="size-[18px]" />
              {label}
            </button>
          ))}
        </div>
      </div>
    </main>
  );
}

function StatusBar() {
  const cell = 'flex h-[22px] shrink-0 items-center border-l border-[#a0a0a0] pl-[7px]';
  return (
    <footer className="flex h-[30px] shrink-0 items-center border-t-2 border-[#a8a8a8] bg-[#f0f0f0]">
      <div className="flex w-[139px] shrink-0 items-center gap-1 pl-[5px]"><Icon name="pencil" />admin</div>
      <div className={`${cell} w-[349px]`} />
      <div className={`${cell} w-[199px]`} />
      <div className={`${cell} w-[199px]`}>x: 39,45 m</div>
      <div className={`${cell} w-[199px]`}>y: -7,116 m</div>
      <div className={`${cell} w-[199px]`}>l:</div>
      <div className="flex h-[22px] grow items-center gap-3 border-l border-[#a0a0a0] pr-1 pl-[7px]">
        <Icon name="antenna" />
        <div role="progressbar" aria-label="Voortgang" className="h-4 grow border border-[#bcbcbc] bg-[#e6e6e6]" />
      </div>
      <div className="flex h-[22px] w-[182px] shrink-0 items-center gap-1 border-l border-[#a0a0a0] pl-[7px]"><Icon name="clock" />14:27:02</div>
    </footer>
  );
}

export default function App() {
  return (
    <div className="flex h-screen bg-linear-to-tr from-[#0066a9] via-[#009394] to-[#00c088] p-[50px] font-['DejaVu_Sans_Condensed','DejaVu_Sans',sans-serif] text-[15px] text-[#1a1a1a]">
      <div className="relative flex min-w-0 grow flex-col overflow-hidden rounded-[10px] border border-[#2b3338] bg-white shadow-[0_14px_34px_rgba(0,0,0,0.5)]">
        <header className="flex h-[45px] shrink-0 items-center bg-linear-to-r from-[#f2f2f8] to-[#f9eef7] pl-[14px]">
          <svg viewBox="0 0 18 20" className="h-5 w-[18px]">
            <path d="M1 4l5-3v15l-5 3zM6 1l5 3v15l-5-3M11 4l6-3v15l-6 3" fill="none" stroke="#e8475a" strokeWidth="2" />
          </svg>
          <h1 className="ml-2 font-['Open_Sans',sans-serif] text-[17px] text-black">Safety Reports 2.8.19.0 INSPECTION 4.3: Demo vestiging</h1>
          <div className="mr-[26px] ml-auto flex gap-[54px]">
            {['M0 7.500h15', 'M2 .7h11q1.300 0 1.300 1.300v11q0 1.300-1.300 1.300H2Q.7 14.300.7 13V2Q.7.7 2 .7z', 'M0 0l15 15M15 0L0 15'].map((d) => (
              <button key={d} aria-label="Venster">
                <svg viewBox="0 0 15 15" className="size-4"><path d={d} fill="none" stroke="#111" strokeWidth="1.300" /></svg>
              </button>
            ))}
          </div>
        </header>

        <nav className="flex h-8 w-[383px] shrink-0 items-center gap-[17px] border-t border-[#e4e4e8] bg-[#f0f0f0] pl-[11px] font-['Open_Sans',sans-serif] text-[17px]">
          {['Bestand', 'Bewerken', 'Project', 'Venster', 'Help'].map((m) => <button key={m}>{m}</button>)}
        </nav>

        <div className="flex h-8 shrink-0 items-center bg-[#f0f0f0] pl-[5px]">
          <Grip />
          <button className="mr-2 ml-4 w-[197px] text-left whitespace-nowrap">Terug naar project overzicht</button>
          <Combo label="Project" value="Risicoanalyse Brand" className="h-6 w-[300px]" />
          <Combo label="Taal" value="NL" className="ml-[6px] h-6 w-[180px]" />
          <Combo label="Filter" value="Geen filter" className="ml-[19px] h-6 w-[159px]" />
          <button aria-label="Filter toepassen" className="ml-2.5">
            <svg viewBox="0 0 34 20" className="h-5 w-[34px]">
              <path d="M3 6h11M0 10h34M3 14h11M20 6h13M20 14h12" stroke="#aaa" strokeWidth="1.500" />
              <path d="M14 1l6 3v15l-6-3z" fill="#bbb" stroke="#777" />
            </svg>
          </button>
          <button aria-label="Vernieuwen" className="ml-3"><Icon name="refresh" /></button>
          <button className="ml-7">Lijsten...</button>
        </div>

        <div className="flex min-h-0 grow gap-[5px] bg-white">
          <ProjectPanel />
          <Editor />
          <LibraryPanel />
        </div>

        <StatusBar />

        {/* pointer arrow laid over the toolbars */}
        <svg viewBox="0 0 80 80" className="pointer-events-none absolute top-[101px] left-[927px] size-20">
          <path d="M15 15l62 60" stroke="#ef3a3c" strokeWidth="5" />
          <path d="M3 2l23 11-9 3-3 9z" fill="#ef3a3c" />
        </svg>
      </div>
    </div>
  );
}
